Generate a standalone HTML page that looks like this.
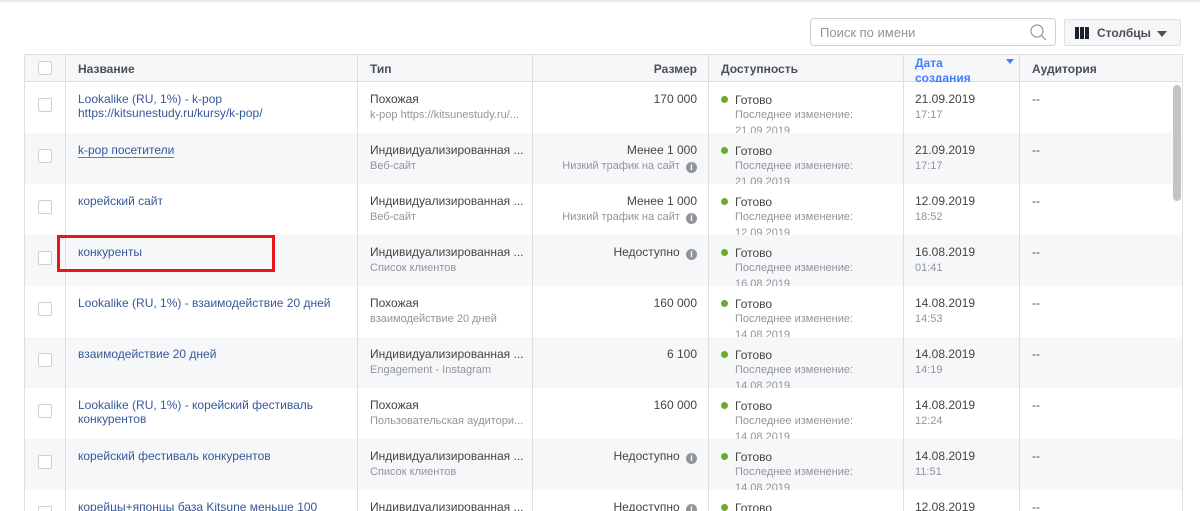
<!DOCTYPE html>
<html><head><meta charset="utf-8"><style>
*{box-sizing:border-box;margin:0;padding:0}
body{width:1200px;height:511px;overflow:hidden;background:#fff;font-family:"Liberation Sans",Arial,sans-serif;font-size:12px;color:#444;position:relative}
.topline{position:absolute;left:0;top:0;width:1200px;height:2px;background:#e9eaed}
.search{position:absolute;left:810px;top:18px;width:246px;height:28px;border:1px solid #ccd0d5;border-radius:4px;color:#90949c;font-size:13px;padding:6px 9px}
.btn{position:absolute;left:1064px;top:19px;width:117px;height:27px;border:1px solid #dddfe2;border-radius:2px;background:#f5f6f7;font-weight:bold;font-size:12px;color:#4b4f56;padding:6px 0 0 32px}
.table{position:absolute;left:24px;top:54px;width:1159px;height:457px;border:1px solid #dddfe2;border-bottom:0;overflow:hidden}
.hdr{position:absolute;left:0;top:0;width:100%;height:27px;background:#f6f7f9;border-bottom:1px solid #dddfe2;font-weight:bold;color:#4b4f56}
.row{position:absolute;left:0;width:100%;height:51px;overflow:hidden}
.g{background:#f6f7f9}
.c{position:absolute;top:0;height:100%;overflow:hidden;white-space:nowrap}
.vl{position:absolute;top:0;width:1px;height:457px;background:#dddfe2}
.cb{position:absolute;left:13px;width:14px;height:14px;border:1px solid #ccd0d5;border-radius:2px;background:#fff}
a{color:#365899;text-decoration:none}
.sub{color:#90949c;font-size:11px;margin-top:3px}
.dot{display:inline-block;width:7px;height:7px;border-radius:50%;background:#6aaa2f;margin-right:7px;vertical-align:1px}
.i{display:inline-block;width:11px;height:11px;border-radius:50%;background:#90949c;color:#fff;font-size:9px;font-weight:bold;text-align:center;line-height:11px;vertical-align:-1px;margin-left:3px}
</style></head><body>
<div class="topline"></div>
<div class="search">Поиск по имени
<svg style="position:absolute;right:8px;top:5px" width="17" height="17" viewBox="0 0 17 17"><circle cx="7" cy="7" r="6" fill="none" stroke="#90949c" stroke-width="1.2"/><line x1="11.3" y1="11.3" x2="16" y2="16" stroke="#90949c" stroke-width="1.2"/></svg></div>
<div class="btn"><span style="position:absolute;left:10px;top:7px;width:14px;height:12px;background:linear-gradient(90deg,#1d2129 0 4px,transparent 4px 5px,#1d2129 5px 9px,transparent 9px 10px,#1d2129 10px)"></span>Столбцы<span style="position:absolute;right:13px;top:11px;border:5px solid transparent;border-top:6px solid #4b4f56;border-bottom:0"></span></div>
<div class="table">
<div class="hdr">
<div class="cb" style="top:6px"></div>
<div class="c" style="left:53px;top:7px">Название</div>
<div class="c" style="left:345px;top:7px">Тип</div>
<div class="c" style="left:508px;width:164px;text-align:right;top:7px">Размер</div>
<div class="c" style="left:696px;top:7px">Доступность</div>
<div class="c" style="left:890px;top:1px;color:#4080ff;line-height:15px;height:26px">Дата<br>создания</div>
<div style="position:absolute;left:981px;top:4px;border:4px solid transparent;border-top:5px solid #4080ff;border-bottom:0"></div>
<div class="c" style="left:1007px;top:7px">Аудитория</div>
</div>
<div id="rows"></div>
<div class="vl" style="left:40px"></div><div class="vl" style="left:332px"></div><div class="vl" style="left:507px"></div><div class="vl" style="left:683px"></div><div class="vl" style="left:878px"></div><div class="vl" style="left:994px"></div>
<div style="position:absolute;left:1148px;top:30px;width:8px;height:116px;border-radius:4px;background:#c4c4c4"></div>
</div>
<div style="position:absolute;left:57px;top:235px;width:218px;height:37px;border:3px solid #e8151b"></div>
<script>
var d=[
["Lookalike (RU, 1%) - k-pop<br>https://kitsunestudy.ru/kursy/k-pop/","Похожая","k-pop https://kitsunestudy.ru/...","170 000","","21.09.2019","17:17","21.09.2019"],
["<span style='outline:1px solid #4080ff'>k-pop посетители</span>","Индивидуализированная ...","Веб-сайт","Менее 1 000","Низкий трафик на сайт <span class=i>i</span>","21.09.2019","17:17","21.09.2019"],
["корейский сайт","Индивидуализированная ...","Веб-сайт","Менее 1 000","Низкий трафик на сайт <span class=i>i</span>","12.09.2019","18:52","12.09.2019"],
["конкуренты","Индивидуализированная ...","Список клиентов","Недоступно <span class=i>i</span>","","16.08.2019","01:41","16.08.2019"],
["Lookalike (RU, 1%) - взаимодействие 20 дней","Похожая","взаимодействие 20 дней","160 000","","14.08.2019","14:53","14.08.2019"],
["взаимодействие 20 дней","Индивидуализированная ...","Engagement - Instagram","6 100","","14.08.2019","14:19","14.08.2019"],
["Lookalike (RU, 1%) - корейский фестиваль<br>конкурентов","Похожая","Пользовательская аудитори...","160 000","","14.08.2019","12:24","14.08.2019"],
["корейский фестиваль конкурентов","Индивидуализированная ...","Список клиентов","Недоступно <span class=i>i</span>","","14.08.2019","11:51","14.08.2019"],
["корейцы+японцы база Kitsune меньше 100","Индивидуализированная ...","","Недоступно <span class=i>i</span>","","12.08.2019","",""]];
var h="";d.forEach(function(r,k){h+='<div class="row'+(k%2?' g':'')+'" style="top:'+(27+k*51)+'px"><div class="cb" style="top:16px"></div>'+
'<div class="c" style="left:53px;top:10px;line-height:14px"><a>'+r[0]+'</a></div>'+
'<div class="c" style="left:345px;top:10px"><div>'+r[1]+'</div><div class="sub">'+r[2]+'</div></div>'+
'<div class="c" style="left:508px;width:164px;text-align:right;top:10px"><div>'+r[3]+'</div><div class="sub">'+r[4]+'</div></div>'+
'<div class="c" style="left:696px;top:10px;line-height:16px"><div><span class="dot"></span>Готово</div><div style="color:#90949c;font-size:11px;padding-left:14px;margin-top:-1px">Последнее изменение:<br>'+r[7]+'</div></div>'+
'<div class="c" style="left:890px;top:10px"><div>'+r[5]+'</div><div style="color:#90949c;margin-top:3px;font-size:11px">'+r[6]+'</div></div>'+
'<div class="c" style="left:1007px;top:10px;color:#4b4f56">--</div></div>'});
document.getElementById("rows").innerHTML=h;
</script>
</body></html>
